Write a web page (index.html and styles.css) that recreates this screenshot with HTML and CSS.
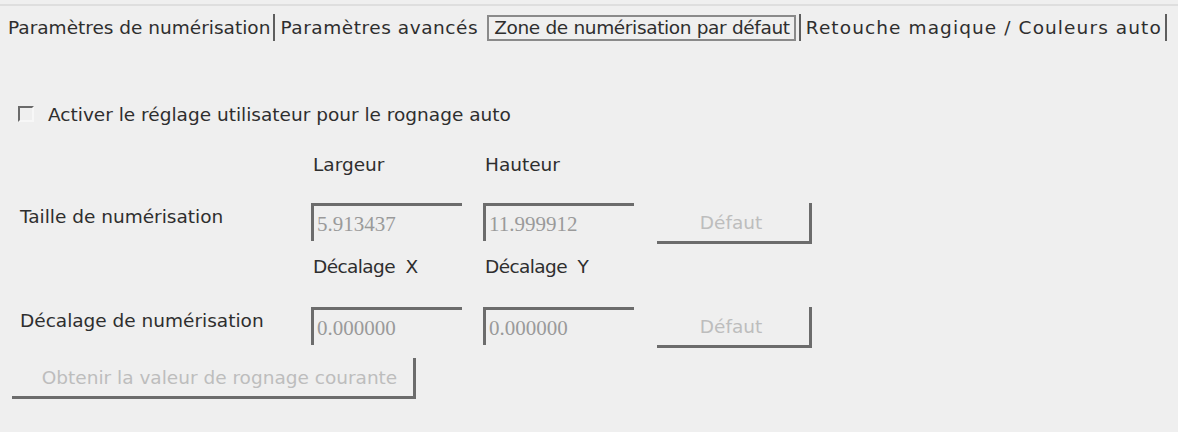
FILE: index.html
```html
<!DOCTYPE html>
<html lang="fr">
<head>
<meta charset="utf-8">
<title>Zone de numérisation par défaut</title>
<link rel="stylesheet" href="styles.css">
</head>
<body>
<div class="topline"></div>
<nav class="tabs">
  <span class="tab">Paramètres de numérisation</span>
  <span class="sep"></span>
  <span class="tab tab-adv">Paramètres avancés</span>
  <span class="tab active">Zone de numérisation par défaut</span>
  <span class="sep"></span>
  <span class="tab tab-retouch">Retouche magique / Couleurs auto</span>
  <span class="sep"></span>
</nav>
<div class="check-row">
  <span class="checkbox"></span>
  <span class="check-label">Activer le réglage utilisateur pour le rognage auto</span>
</div>
<div class="form">
  <div class="cell"></div>
  <div class="cell head">Largeur</div>
  <div class="cell head">Hauteur</div>
  <div class="cell"></div>

  <div class="cell label">Taille de numérisation</div>
  <div class="cell"><span class="field">5.913437</span></div>
  <div class="cell"><span class="field">11.999912</span></div>
  <div class="cell"><span class="btn small">Défaut</span></div>

  <div class="cell"></div>
  <div class="cell head second">Décalage&nbsp; X</div>
  <div class="cell head second">Décalage&nbsp; Y</div>
  <div class="cell"></div>

  <div class="cell label">Décalage de numérisation</div>
  <div class="cell"><span class="field">0.000000</span></div>
  <div class="cell"><span class="field">0.000000</span></div>
  <div class="cell"><span class="btn small">Défaut</span></div>
</div>
<div class="bottom-row">
  <span class="btn wide">Obtenir la valeur de rognage courante</span>
</div>
</body>
</html>
```
FILE: styles.css
```css
html, body {
  margin: 0;
  padding: 0;
  background: #efefef;
}
body {
  width: 1178px;
  height: 432px;
  overflow: hidden;
  font-family: "DejaVu Sans", "Noto Sans", sans-serif;
  font-size: 18.5px;
  color: #2e2e2e;
}
.topline {
  height: 2px;
  margin-top: 4px;
  background: #dedede;
}
.tabs {
  display: flex;
  align-items: center;
  height: 27px;
  margin-top: 8px;
  padding-left: 8px;
}
.tab {
  white-space: nowrap;
  line-height: 24px;
}
.tab-adv {
  letter-spacing: 0.55px;
}
.tab-retouch {
  letter-spacing: 1.1px;
}
.tab.active {
  border: 2px solid #8a8a8a;
  padding: 0 4px 0 5px;
  margin-left: 9px;
  height: 22px;
  line-height: 22px;
  letter-spacing: -0.35px;
}
.sep {
  width: 2px;
  height: 27px;
  background: #5e5e5e;
  margin: 0 5px 0 3px;
}
.check-row {
  display: flex;
  align-items: center;
  margin-top: 63px;
  padding-left: 18px;
  height: 20px;
}
.checkbox {
  width: 12px;
  height: 12px;
  border-top: 2px solid #6a6a6a;
  border-left: 2px solid #6a6a6a;
  border-right: 2px solid #f7f7f7;
  border-bottom: 2px solid #f7f7f7;
  margin-right: 14px;
}
.form {
  display: grid;
  grid-template-columns: 293px 172px 174px 160px;
  grid-template-rows: 53px 41px 63px 41px;
  margin-top: 26px;
  padding-left: 18px;
}
.cell {
  display: flex;
  align-items: flex-start;
  white-space: nowrap;
}
.head {
  padding-left: 2px;
  line-height: 30px;
}
.head.second {
  padding-top: 8px;
  letter-spacing: -0.6px;
}
.label {
  padding-left: 2px;
  line-height: 28px;
}
.field {
  box-sizing: border-box;
  width: 151px;
  height: 38px;
  border-top: 3px solid #6c6c6c;
  border-left: 3px solid #6c6c6c;
  padding: 4px 0 0 3px;
  font-family: "Liberation Serif", serif;
  font-size: 21px;
  color: #9a9a9a;
  line-height: 28px;
}
.btn {
  box-sizing: border-box;
  display: inline-flex;
  align-items: center;
  justify-content: center;
  border-right: 3px solid #6c6c6c;
  border-bottom: 3px solid #6c6c6c;
  color: #bdbdbd;
  white-space: nowrap;
}
.btn.small {
  width: 155px;
  height: 41px;
  padding-right: 4px;
}
.bottom-row {
  display: flex;
  margin-top: 10px;
  padding-left: 12px;
}
.btn.wide {
  width: 404px;
  height: 41px;
  padding-left: 14px;
}
```
